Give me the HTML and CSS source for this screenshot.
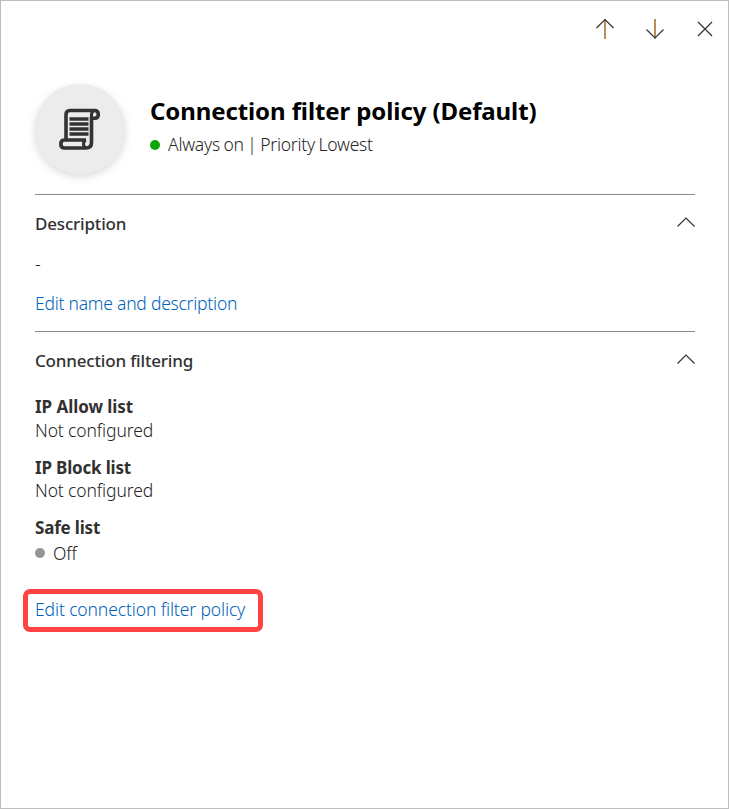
FILE: index.html
```html
<!DOCTYPE html>
<html lang="en">
<head>
<meta charset="utf-8">
<title>Connection filter policy (Default)</title>
<link rel="stylesheet" href="styles.css">
</head>
<body>
<main class="panel">
  <nav class="toolbar">
    <button class="tool" aria-label="Previous"><svg width="20" height="22" viewBox="0 0 20 22"><path class="shaft" d="M10 1.5V21"/><path d="M1.500 10L10 1.500L18.500 10"/></svg></button>
    <button class="tool" aria-label="Next"><svg width="20" height="22" viewBox="0 0 20 22"><path class="shaft" d="M10 1V20.500"/><path d="M1.500 11.500L10 20L18.500 11.500"/></svg></button>
    <button class="tool" aria-label="Close"><svg width="20" height="22" viewBox="0 0 20 22"><path d="M3 4L17 18M17 4L3 18"/></svg></button>
  </nav>
  <header class="head">
    <div class="avatar">
      <svg width="44" height="44" viewBox="0 0 44 44">
        <path d="M8 32V7.500Q8 3.500 12 3.500H36.500Q40.300 3.500 40.300 7.500Q40.300 11.300 36.500 11.300H33.500V35.500Q33.500 41 28 41H6.500Q2.800 41 2.800 37Q2.800 33 6.500 33H28"/>
        <path class="curl" d="M36 4Q33.500 4.500 33.500 8V12M28 33Q25.500 34 25.500 37Q25.500 40 28 40.500"/>
        <path class="lines" d="M11.500 12H30.500M11.500 17H30.500M11.500 22H30.500M11.500 27H30.500"/>
      </svg>
    </div>
    <div class="heading">
      <h1 class="title">Connection filter policy (Default)</h1>
      <p class="status"><span class="dot dot-on"></span><span class="status-text">Always on | Priority Lowest</span></p>
    </div>
  </header>
  <section class="section description">
    <div class="section-head"><h2>Description</h2><svg class="chevron" width="20" height="12" viewBox="0 0 20 12"><path d="M1.500 10.500L10 2L18.500 10.500"/></svg></div>
    <p class="dash">-</p>
    <a class="link t-edit">Edit name and description</a>
  </section>
  <section class="section">
    <div class="section-head"><h2>Connection filtering</h2><svg class="chevron" width="20" height="12" viewBox="0 0 20 12"><path d="M1.500 10.500L10 2L18.500 10.500"/></svg></div>
    <dl class="fields">
      <div class="field allow"><dt>IP Allow list</dt><dd>Not configured</dd></div>
      <div class="field block"><dt>IP Block list</dt><dd>Not configured</dd></div>
      <div class="field safe"><dt>Safe list</dt><dd class="off"><span class="dot dot-off"></span>Off</dd></div>
    </dl>
    <a class="link callout">Edit connection filter policy</a>
  </section>
</main>
</body>
</html>
```
FILE: styles.css
```css
* { box-sizing: border-box; }
body { margin: 0; background: #fff; }
h1, h2, p, dl, dd { margin: 0; }
svg { display: block; fill: none; stroke: #323130; stroke-width: 1.2; }

.panel {
  width: 729px;
  height: 809px;
  padding: 0 33px 0 34px;
  border: 1px solid #bdbdbd;
  font: 360 17.5px/24px "Noto Sans", "Open Sans", sans-serif;
  color: #262524;
  overflow: hidden;
}

.toolbar {
  display: flex;
  justify-content: flex-end;
  gap: 30px;
  margin: 17px -20px 0 0;
}
.tool { width: 20px; height: 22px; padding: 0; border: 0; background: none; }
.shaft { stroke: #a87132; stroke-width: 1.6; }

.head { display: flex; height: 110px; margin-top: 44px; }
.avatar {
  display: flex;
  align-items: center;
  justify-content: center;
  flex: none;
  width: 90px;
  height: 90px;
  border-radius: 50%;
  background: #ececec;
  box-shadow: 0 3px 8px rgba(0, 0, 0, .15);
}
.avatar svg { stroke: #333; stroke-width: 3.6; }
.avatar .curl { stroke-width: 3; }
.avatar .lines { stroke-width: 3.3; }
.heading { margin-left: 25px; padding-top: 11px; white-space: nowrap; }
.title { font-size: 24px; line-height: 32px; font-weight: 700; letter-spacing: -.1px; color: #000; }
.status { display: flex; align-items: center; height: 24px; margin-top: 6px; }
.status-text { padding-bottom: 2px; letter-spacing: -.25px; word-spacing: -.7px; }
.dot { flex: none; width: 10px; height: 10px; margin-right: 8px; border-radius: 50%; }
.dot-on { background: #0aa60a; }
.dot-off { background: #979593; }

.section { width: 660px; border-top: 1px solid #8a8886; padding-top: 17px; }
.description { height: 137px; }
.section-head { display: flex; justify-content: space-between; }
.section-head h2 { font-size: 17px; line-height: 24px; font-weight: 500; letter-spacing: -.18px; color: #323130; }
.chevron { margin: 3.5px -1px 0 0; }
.dash { margin-top: 15px; }
.link { display: block; width: max-content; color: #0062ba; }
.t-edit { margin-top: 16px; letter-spacing: -.24px; }
.fields { margin-top: 22px; }
.field dt { font-size: 17px; font-weight: 700; color: #323130; letter-spacing: -.05px; }
.block dt, .safe dt { letter-spacing: -.18px; }
.field dd { margin-top: -1px; letter-spacing: -.12px; }
.allow { height: 61px; }
.block { height: 60px; }
.block dd { margin-top: -2px; }
.safe { height: 50px; }
.safe .off { display: flex; align-items: center; margin-top: 1px; }
.callout {
  display: flex;
  align-items: center;
  width: 240px;
  height: 43px;
  margin: 23px 0 0 -12px;
  padding: 0 0 4px 7px;
  border: 5px solid #ff4343;
  border-radius: 7px;
  letter-spacing: -.12px;
}
```
